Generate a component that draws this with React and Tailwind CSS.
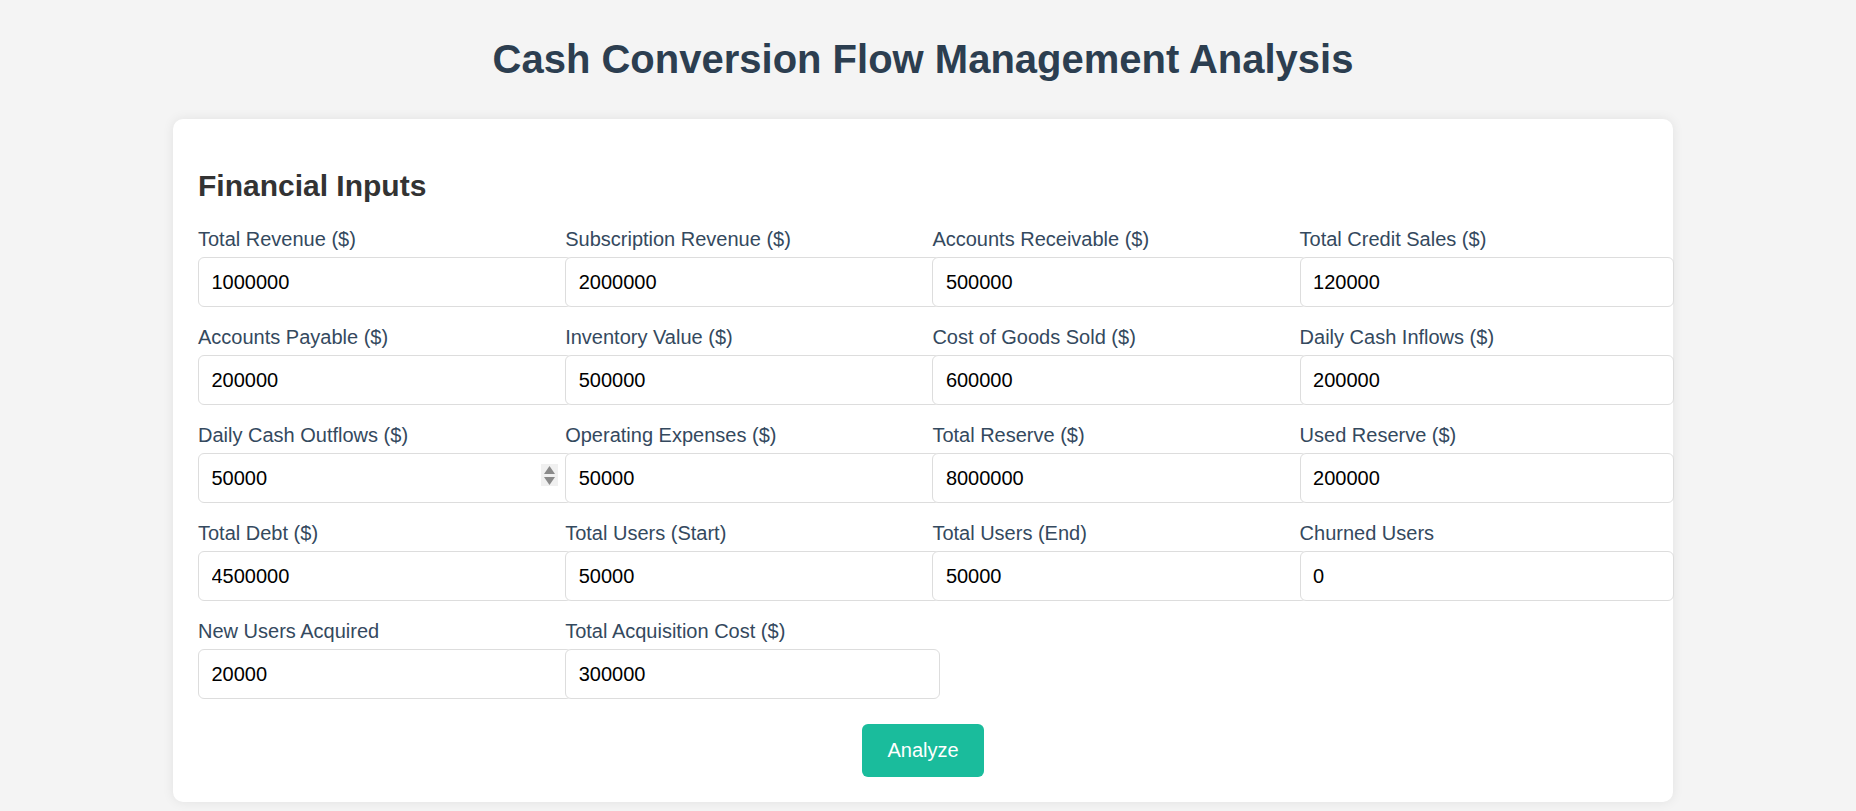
import React, { useState } from 'react'

// Input fields for the analysis form
const FIELDS = [
  { key: 'totalRevenue', label: 'Total Revenue ($)', value: '1000000' },
  { key: 'subscriptionRevenue', label: 'Subscription Revenue ($)', value: '2000000' },
  { key: 'accountsReceivable', label: 'Accounts Receivable ($)', value: '500000' },
  { key: 'totalCreditSales', label: 'Total Credit Sales ($)', value: '120000' },
  { key: 'accountsPayable', label: 'Accounts Payable ($)', value: '200000' },
  { key: 'inventoryValue', label: 'Inventory Value ($)', value: '500000' },
  { key: 'cogs', label: 'Cost of Goods Sold ($)', value: '600000' },
  { key: 'dailyInflows', label: 'Daily Cash Inflows ($)', value: '200000' },
  { key: 'dailyOutflows', label: 'Daily Cash Outflows ($)', value: '50000', spinner: true },
  { key: 'operatingExpenses', label: 'Operating Expenses ($)', value: '50000' },
  { key: 'totalReserve', label: 'Total Reserve ($)', value: '8000000' },
  { key: 'usedReserve', label: 'Used Reserve ($)', value: '200000' },
  { key: 'totalDebt', label: 'Total Debt ($)', value: '4500000' },
  { key: 'usersStart', label: 'Total Users (Start)', value: '50000' },
  { key: 'usersEnd', label: 'Total Users (End)', value: '50000' },
  { key: 'churnedUsers', label: 'Churned Users', value: '0' },
  { key: 'newUsers', label: 'New Users Acquired', value: '20000' },
  { key: 'acquisitionCost', label: 'Total Acquisition Cost ($)', value: '300000' },
]

function Spinner() {
  return (
    <div className="absolute right-[14px] top-[11px] flex h-[22px] w-[17px] flex-col items-center justify-center gap-[3px] bg-[#f0f0f0]">
      <svg width="11" height="8" viewBox="0 0 11 8">
        <path d="M5.5 0 L11 8 L0 8 Z" fill="#8a8a8a" />
      </svg>
      <svg width="11" height="8" viewBox="0 0 11 8">
        <path d="M0 0 L11 0 L5.5 8 Z" fill="#8a8a8a" />
      </svg>
    </div>
  )
}

export default function App() {
  const [values, setValues] = useState(
    Object.fromEntries(FIELDS.map(f => [f.key, f.value]))
  )

  return (
    <div className="min-h-screen bg-[#f4f4f4] pr-[10px] pt-[36px] pb-[9px] font-['Liberation_Sans',Arial,sans-serif]">
      <h1 className="text-center text-[40px] leading-[46px] font-bold text-[#2c3e50] mb-[37px]">
        Cash Conversion Flow Management Analysis
      </h1>

      <div className="mx-auto w-[1500px] rounded-[10px] bg-white px-[25px] pt-[50px] pb-[25px] shadow-[0_0_12px_rgba(0,0,0,0.08)]">
        <h2 className="text-[30px] leading-[34px] font-bold text-[#333] mb-[25px]">
          Financial Inputs
        </h2>

        <div className="grid grid-cols-4 gap-x-[18.75px] gap-y-[18.75px]">
          {FIELDS.map(f => (
            <div key={f.key} className="flex min-w-0 flex-col">
              <label className="mb-[6.25px] block text-[20px] leading-[23px] text-[#34495e]">
                {f.label}
              </label>
              <div className="relative w-[calc(100%+26px)]">
                <input
                  type="text"
                  value={values[f.key]}
                  onChange={e => setValues({ ...values, [f.key]: e.target.value })}
                  className="block h-[50px] w-full rounded-[6px] border border-[#ddd] bg-white px-[12.5px] text-[20px] text-black outline-none"
                />
                {f.spinner && <Spinner />}
              </div>
            </div>
          ))}
        </div>

        <div className="mt-[25px] flex justify-center">
          <button className="rounded-[6px] bg-[#1abc9c] px-[25px] py-[15px] text-[20px] leading-[23px] text-white">
            Analyze
          </button>
        </div>
      </div>
    </div>
  )
}
